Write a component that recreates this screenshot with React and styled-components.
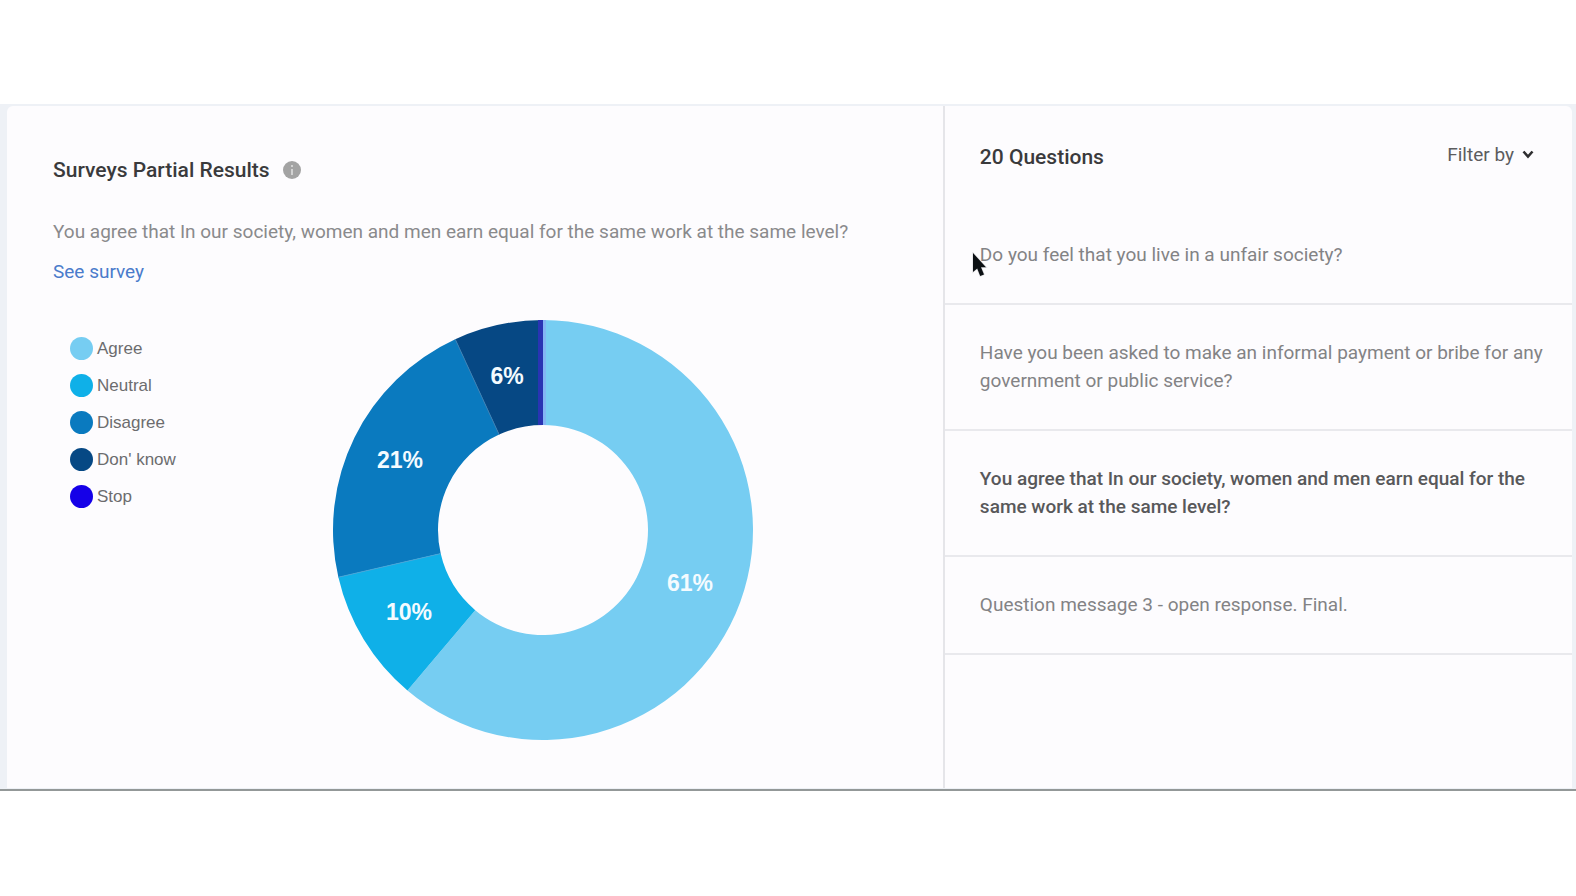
import React from "react";
import styled, { createGlobalStyle } from "styled-components";

const GlobalStyle = createGlobalStyle`
  *, *::before, *::after { box-sizing: border-box; }
  body { margin: 0; background: #ffffff; font-family: Roboto, "Liberation Sans", sans-serif; }
  h1, h2, p, ul { margin: 0; padding: 0; }
  ul { list-style: none; }
  button { font: inherit; border: 0; background: none; padding: 0; cursor: pointer; }
`;

const Page = styled.div`
  padding: 104px 0;
`;

const Frame = styled.div`
  padding: 2px 4px 1px 7px;
  background: #eef1f6;
  border-bottom: 2px solid #939898;
`;

const Card = styled.main`
  display: grid;
  grid-template-columns: 59.8% 1fr;
  border-radius: 6px 6px 0 0;
  background: #fdfcfe;
`;

const Results = styled.section`
  padding: 48px 46px;
`;

const TitleRow = styled.div`
  display: flex;
  align-items: center;
  gap: 13px;
`;

const Title = styled.h2`
  font-size: 21px;
  line-height: 32px;
  font-weight: 500;
  color: #3a3a3c;
`;

const InfoButton = styled.button`
  display: flex;
  width: 18px;
  height: 18px;
`;

const Prompt = styled.p`
  margin-top: 32px;
  font-size: 19px;
  line-height: 28px;
  color: #8a8a8c;
`;

const SurveyLink = styled.a`
  display: inline-block;
  margin-top: 12px;
  font-size: 19px;
  line-height: 28px;
  color: #4a7bcb;
  text-decoration: none;
`;

const ChartArea = styled.div`
  display: flex;
  margin-top: 34px;
`;

const Legend = styled.ul`
  flex: 0 1 280px;
  padding: 10px 0 0 17px;
`;

const LegendItem = styled.li`
  display: flex;
  align-items: center;
  gap: 4px;
  height: 37px;
  font-family: "Liberation Sans", Arial, sans-serif;
  font-size: 17px;
  color: #6c6c6e;
`;

const Swatch = styled.span`
  width: 23px;
  height: 23px;
  border-radius: 50%;
  background: ${({ $color }) => $color};
`;

const Donut = styled.svg`
  flex: 0 1 420px;
  min-width: 0;
  height: 420px;
`;

const SliceLabel = styled.text`
  font-family: "Liberation Sans", Arial, sans-serif;
  font-size: 23px;
  font-weight: 700;
  fill: #f4fbff;
  text-anchor: middle;
`;

const Questions = styled.section`
  border-left: 2px solid #e5e5e9;
`;

const QuestionsHeader = styled.header`
  display: flex;
  justify-content: space-between;
  align-items: flex-start;
  height: 101px;
  padding: 35px 38px 0 35px;
`;

const FilterButton = styled.button`
  display: flex;
  align-items: center;
  gap: 8px;
  font-size: 19px;
  line-height: 28px;
  color: #5c5c5e;
`;

const QuestionItem = styled.li`
  border-bottom: 2px solid #e9e9ed;
`;

const QuestionButton = styled.button`
  display: block;
  width: 100%;
  padding: 34px 20px 34px 35px;
  text-align: left;
  font-size: 19px;
  line-height: 28px;
  font-weight: ${({ $active }) => ($active ? 500 : 400)};
  color: ${({ $active }) => ($active ? "#58585a" : "#838385")};
`;

const QuestionList = styled.div`
  position: relative;
`;

const Pointer = styled.svg`
  position: absolute;
  left: 27px;
  top: 45px;
  width: 16px;
  height: 28px;
  pointer-events: none;
`;

const SLICES = [
  { name: "Agree", color: "#76cdf2", from: 0, to: 220.2, label: "61%", x: 357, y: 271 },
  { name: "Neutral", color: "#0fb0e8", from: 220.2, to: 257, label: "10%", x: 76, y: 300 },
  { name: "Disagree", color: "#0a7abf", from: 257, to: 335.3, label: "21%", x: 67, y: 148 },
  { name: "Don' know", color: "#064884", from: 335.3, to: 360, label: "6%", x: 174, y: 64 },
];

const LEGEND = [...SLICES, { name: "Stop", color: "#1500e8" }];

const QUESTIONS = [
  { text: "Do you feel that you live in a unfair society?" },
  { text: "Have you been asked to make an informal payment or bribe for any government or public service?" },
  {
    text: "You agree that In our society, women and men earn equal for the same work at the same level?",
    active: true,
  },
  { text: "Question message 3 - open response. Final." },
];

const CENTER = 210;
const OUTER = 210;
const INNER = 105;

function point(radius, degrees) {
  const a = (degrees * Math.PI) / 180;
  return `${CENTER + radius * Math.sin(a)} ${CENTER - radius * Math.cos(a)}`;
}

function slicePath(from, to) {
  const large = to - from > 180 ? 1 : 0;
  return [
    `M ${point(OUTER, from)}`,
    `A ${OUTER} ${OUTER} 0 ${large} 1 ${point(OUTER, to)}`,
    `L ${point(INNER, to)}`,
    `A ${INNER} ${INNER} 0 ${large} 0 ${point(INNER, from)}`,
    "Z",
  ].join(" ");
}

function edgePath(degrees) {
  return `M ${point(INNER, degrees)} L ${point(OUTER, degrees)}`;
}

function DonutChart() {
  return (
    <Donut viewBox="0 0 420 420" role="img" aria-label="Survey results by answer">
      {SLICES.map((s) => (
        <path key={s.name} d={slicePath(s.from, s.to)} fill={s.color} />
      ))}
      <path d={edgePath(257)} stroke="#45a6d9" strokeWidth="1" />
      <path d={edgePath(335.3)} stroke="#397fb4" strokeWidth="1" />
      <rect x="205" y="0" width="5" height="105" fill="#2934b3" />
      <rect x="210" y="0" width="3" height="105" fill="#83b5f4" />
      {SLICES.map((s) => (
        <SliceLabel key={s.name} x={s.x} y={s.y}>
          {s.label}
        </SliceLabel>
      ))}
    </Donut>
  );
}

function InfoIcon() {
  return (
    <svg width="18" height="18" viewBox="0 0 18 18" aria-hidden="true">
      <circle cx="9" cy="9" r="9" fill="#a3a3a3" />
      <rect x="8" y="4" width="2" height="2" fill="#d2d2d2" />
      <rect x="8" y="8" width="2" height="6" fill="#d2d2d2" />
    </svg>
  );
}

function Chevron() {
  return (
    <svg width="12" height="10" viewBox="0 0 12 10" fill="none" aria-hidden="true">
      <path d="M1.5 1.5 L6 6.5 L10.5 1.5" stroke="#2e2e30" strokeWidth="2.6" />
    </svg>
  );
}

function PointerArrow() {
  return (
    <Pointer viewBox="0 0 16 28" aria-hidden="true">
      <path
        d="M1 1 V20 L5.2 16.5 L8.2 24 L12 22.4 L9 15.2 H14 Z"
        fill="#0c1014"
        stroke="#e2e2e4"
        strokeWidth="1.4"
        paintOrder="stroke"
      />
    </Pointer>
  );
}

export default function App() {
  return (
    <Page>
      <GlobalStyle />
      <Frame>
        <Card>
          <Results>
            <TitleRow>
              <Title>Surveys Partial Results</Title>
              <InfoButton type="button" aria-label="More information">
                <InfoIcon />
              </InfoButton>
            </TitleRow>
            <Prompt>
              You agree that In our society, women and men earn equal for the same work at the same level?
            </Prompt>
            <SurveyLink href="#survey">See survey</SurveyLink>
            <ChartArea>
              <Legend>
                {LEGEND.map((item) => (
                  <LegendItem key={item.name}>
                    <Swatch $color={item.color} />
                    {item.name}
                  </LegendItem>
                ))}
              </Legend>
              <DonutChart />
            </ChartArea>
          </Results>
          <Questions>
            <QuestionsHeader>
              <Title>20 Questions</Title>
              <FilterButton type="button" aria-haspopup="menu">
                Filter by
                <Chevron />
              </FilterButton>
            </QuestionsHeader>
            <QuestionList>
              <ul>
                {QUESTIONS.map((q) => (
                  <QuestionItem key={q.text}>
                    <QuestionButton type="button" $active={q.active}>
                      {q.text}
                    </QuestionButton>
                  </QuestionItem>
                ))}
              </ul>
              <PointerArrow />
            </QuestionList>
          </Questions>
        </Card>
      </Frame>
    </Page>
  );
}
